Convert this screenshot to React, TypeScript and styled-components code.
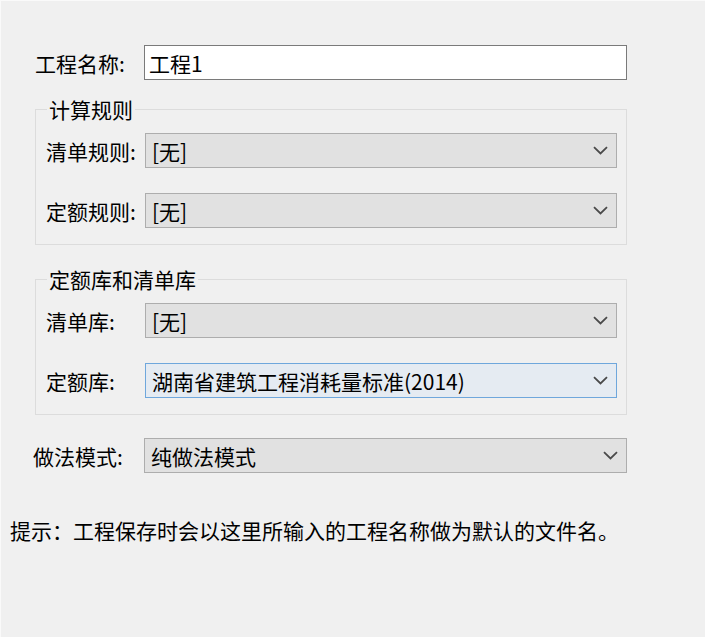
import React from "react";
import styled, { createGlobalStyle } from "styled-components";

const GlobalStyle = createGlobalStyle`
  html, body {
    margin: 0;
    padding: 0;
    background: #f0f0f0;
  }
  body {
    font-family: "Noto Sans CJK SC", "Noto Sans", sans-serif;
    color: #000;
  }
`;

const Page = styled.div`
  display: flex;
  flex-direction: column;
  width: 705px;
  height: 637px;
  box-sizing: border-box;
  padding-top: 44px;
  background: #f0f0f0;
  border-top: 1px solid #fafafa;
  border-left: 1px solid #fafafa;
  overflow: hidden;
`;

const Form = styled.div`
  display: flex;
  flex-direction: column;
  width: 592px;
  margin-left: 34px;
`;

const Row = styled.div<{ $offset?: number; $top?: number }>`
  display: flex;
  align-items: center;
  height: 35px;
  margin-left: ${(p) => p.$offset ?? 0}px;
  margin-top: ${(p) => p.$top ?? 0}px;
`;

const Label = styled.span<{ $width: number }>`
  flex: none;
  width: ${(p) => p.$width}px;
  font-size: 21px;
  line-height: 24px;
  white-space: nowrap;
`;

const TextInput = styled.input`
  width: 484px;
  height: 35px;
  box-sizing: border-box;
  margin: 0;
  padding: 0 4px;
  border: 1px solid #7a7a7a;
  background: #fff;
  font-family: inherit;
  font-size: 21px;
  color: #000;
  outline: none;
`;

const Group = styled.fieldset<{ $top: number }>`
  margin: ${(p) => p.$top}px 0 0 0;
  padding: 12px 9px 16px 10px;
  border: 1px solid #dcdcdc;
  display: flex;
  flex-direction: column;
  gap: 25px;
`;

const Legend = styled.legend`
  margin-left: 1px;
  padding: 0 2px;
  font-size: 21px;
  line-height: 24px;
`;

const Combo = styled.div<{ $width: number; $active?: boolean }>`
  display: flex;
  align-items: center;
  justify-content: space-between;
  width: ${(p) => p.$width}px;
  height: 35px;
  box-sizing: border-box;
  padding: 0 8px 0 6px;
  border: 1px solid ${(p) => (p.$active ? "#6fa7dc" : "#adadad")};
  background: ${(p) => (p.$active ? "#e5ebf2" : "#e1e1e1")};
  font-size: 21px;
  line-height: 24px;
  white-space: nowrap;
`;

const Chevron = () => (
  <svg width="15" height="9" viewBox="0 0 15 9">
    <path d="M1 1.2 L7.5 7.4 L14 1.2" fill="none" stroke="#4a4a4a" strokeWidth="1.8" />
  </svg>
);

const Hint = styled.p`
  margin: 45px 0 0 9px;
  font-size: 21px;
  line-height: 24px;
  white-space: nowrap;
`;

type ComboRowProps = {
  label: string;
  value: string;
  active?: boolean;
};

const ComboRow = ({ label, value, active }: ComboRowProps) => (
  <Row>
    <Label $width={99}>{label}</Label>
    <Combo $width={472} $active={active}>
      <span>{value}</span>
      <Chevron />
    </Combo>
  </Row>
);

export default function App() {
  return (
    <>
      <GlobalStyle />
      <Page>
        <Form>
          <Row>
            <Label $width={109}>工程名称:</Label>
            <TextInput defaultValue="工程1" />
          </Row>

          <Group $top={17}>
            <Legend>计算规则</Legend>
            <ComboRow label="清单规则:" value="[无]" />
            <ComboRow label="定额规则:" value="[无]" />
          </Group>

          <Group $top={22}>
            <Legend>定额库和清单库</Legend>
            <ComboRow label="清单库:" value="[无]" />
            <ComboRow label="定额库:" value="湖南省建筑工程消耗量标准(2014)" active />
          </Group>

          <Row $offset={-2} $top={23}>
            <Label $width={111}>做法模式:</Label>
            <Combo $width={484}>
              <span>纯做法模式</span>
              <Chevron />
            </Combo>
          </Row>
        </Form>
        <Hint>提示：工程保存时会以这里所输入的工程名称做为默认的文件名。</Hint>
      </Page>
    </>
  );
}
